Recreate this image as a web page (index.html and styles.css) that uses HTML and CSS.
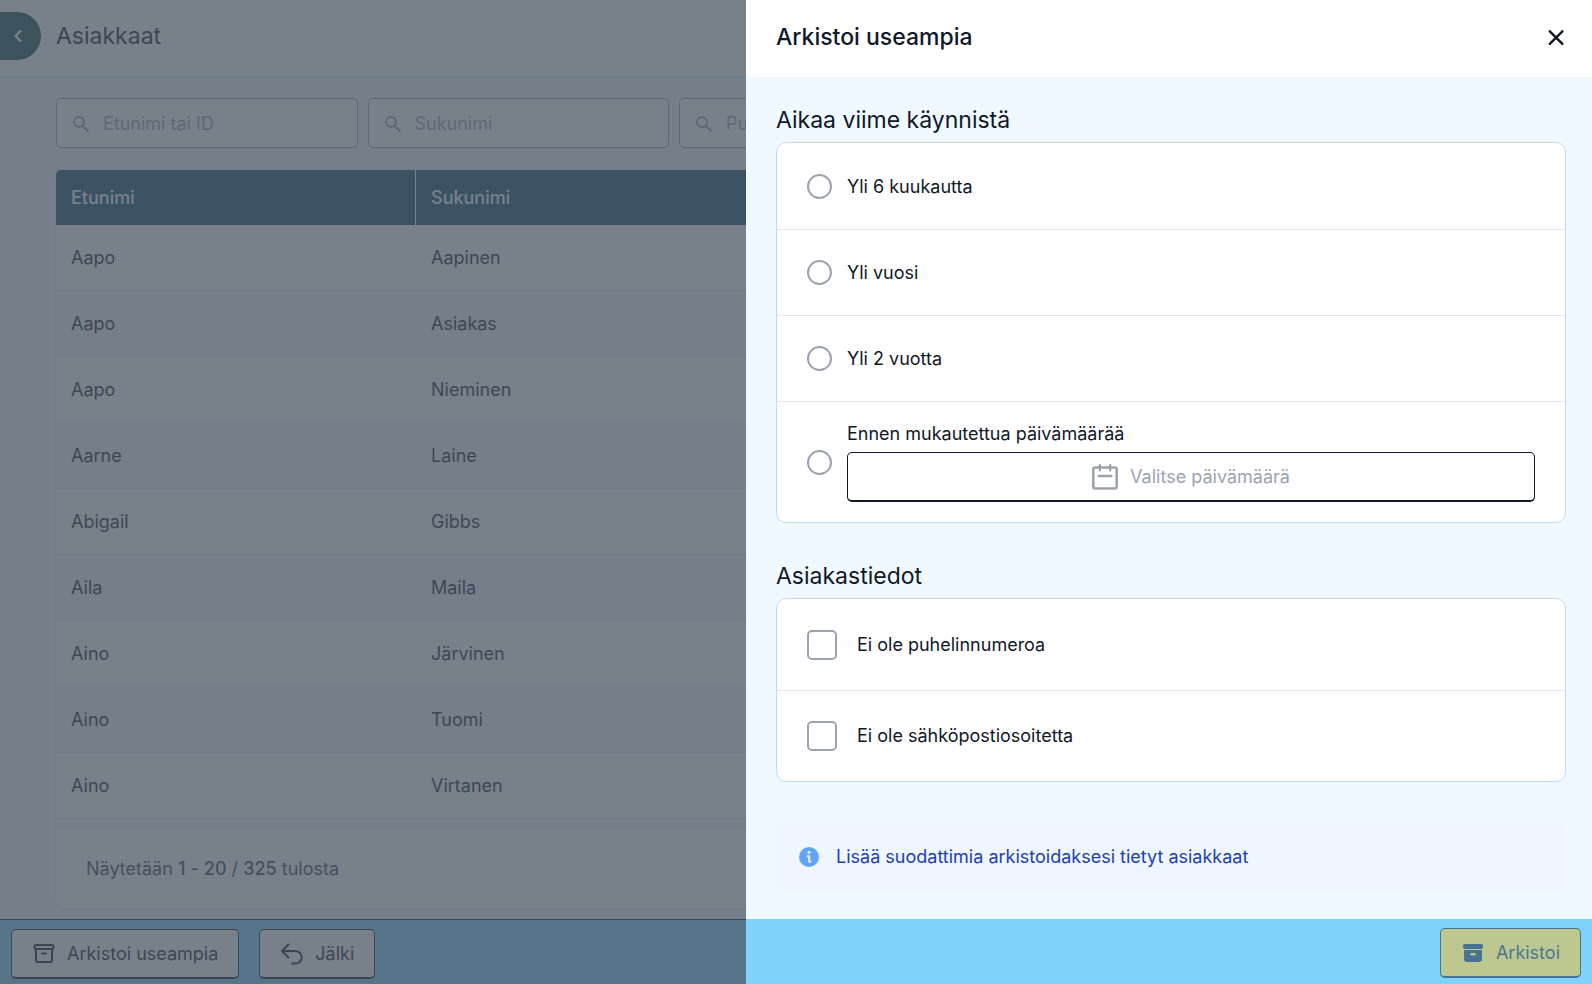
FILE: index.html
```html
<!DOCTYPE html>
<html lang="fi">
<head>
<meta charset="utf-8">
<meta name="viewport" content="width=device-width, initial-scale=1">
<title>Asiakkaat</title>
<link rel="stylesheet" href="styles.css">
</head>
<body>
<div class="page">
  <header class="page-header">
    <button class="nav-toggle" type="button" aria-label="Takaisin">
      <svg width="24" height="24" viewBox="0 0 20 20" fill="currentColor"><path fill-rule="evenodd" d="M12.7 5.3a1 1 0 0 1 0 1.4L9.4 10l3.3 3.3a1 1 0 0 1-1.4 1.4l-4-4a1 1 0 0 1 0-1.4l4-4a1 1 0 0 1 1.4 0z"/></svg>
    </button>
    <h1 class="page-title">Asiakkaat</h1>
  </header>

  <main class="content">
    <form class="filters">
      <label class="search">
        <svg class="search-icon" width="20" height="20" viewBox="0 0 20 20" fill="currentColor"><path fill-rule="evenodd" d="M8 4a4 4 0 1 0 0 8 4 4 0 0 0 0-8zM2 8a6 6 0 1 1 10.9 3.5l4.8 4.8a1 1 0 0 1-1.4 1.4l-4.8-4.8A6 6 0 0 1 2 8z"/></svg>
        <input class="search-input" type="text" placeholder="Etunimi tai ID" aria-label="Etunimi tai ID">
      </label>
      <label class="search">
        <svg class="search-icon" width="20" height="20" viewBox="0 0 20 20" fill="currentColor"><path fill-rule="evenodd" d="M8 4a4 4 0 1 0 0 8 4 4 0 0 0 0-8zM2 8a6 6 0 1 1 10.9 3.5l4.8 4.8a1 1 0 0 1-1.4 1.4l-4.8-4.8A6 6 0 0 1 2 8z"/></svg>
        <input class="search-input" type="text" placeholder="Sukunimi" aria-label="Sukunimi">
      </label>
      <label class="search">
        <svg class="search-icon" width="20" height="20" viewBox="0 0 20 20" fill="currentColor"><path fill-rule="evenodd" d="M8 4a4 4 0 1 0 0 8 4 4 0 0 0 0-8zM2 8a6 6 0 1 1 10.9 3.5l4.8 4.8a1 1 0 0 1-1.4 1.4l-4.8-4.8A6 6 0 0 1 2 8z"/></svg>
        <input class="search-input" type="text" placeholder="Puhelin" aria-label="Puhelin">
      </label>
    </form>

    <section class="results">
      <div class="table-scroll">
        <table class="clients">
          <thead>
            <tr><th class="col-first" scope="col">Etunimi</th><th scope="col">Sukunimi</th></tr>
          </thead>
          <tbody>
            <tr><td>Aapo</td><td>Aapinen</td></tr>
            <tr><td>Aapo</td><td>Asiakas</td></tr>
            <tr><td>Aapo</td><td>Nieminen</td></tr>
            <tr><td>Aarne</td><td>Laine</td></tr>
            <tr><td>Abigail</td><td>Gibbs</td></tr>
            <tr><td>Aila</td><td>Maila</td></tr>
            <tr><td>Aino</td><td>Järvinen</td></tr>
            <tr><td>Aino</td><td>Tuomi</td></tr>
            <tr><td>Aino</td><td>Virtanen</td></tr>
            <tr><td></td><td></td></tr>
          </tbody>
        </table>
      </div>
      <p class="pagination">Näytetään <b>1</b> <b>-</b> <b>20</b> / <b>325</b> tulosta</p>
    </section>
  </main>

  <footer class="toolbar">
    <button class="btn" type="button">
      <svg width="22" height="22" viewBox="0 0 22 22" fill="none" stroke="currentColor" stroke-width="2" stroke-linecap="round" stroke-linejoin="round"><rect x="1.500" y="2" width="19" height="4" rx="1.500"/><path d="M3 6.500V17a2 2 0 0 0 2 2h12a2 2 0 0 0 2-2V6.500M9 10.500h4"/></svg>
      Arkistoi useampia
    </button>
    <button class="btn" type="button">
      <svg width="22" height="22" viewBox="0 0 22 22" fill="none" stroke="currentColor" stroke-width="2" stroke-linecap="round" stroke-linejoin="round"><path d="M7.500 14.500 1 8l6.500-6.500M1 8h13.500a6 6 0 0 1 0 12.500H11"/></svg>
      Jälki
    </button>
  </footer>
</div>

<div class="overlay"></div>

<aside class="panel" role="dialog" aria-labelledby="panel-title">
  <header class="panel-header">
    <h2 class="panel-title" id="panel-title">Arkistoi useampia</h2>
    <button class="close" type="button" aria-label="Sulje">
      <svg width="22" height="22" viewBox="0 0 22 22" fill="none" stroke="currentColor" stroke-width="2.400" stroke-linecap="round"><path d="M4.800 5.300l12.600 12.600M17.400 5.300l-12.600 12.600"/></svg>
    </button>
  </header>

  <div class="panel-body">
    <section class="group">
      <h3 class="group-title">Aikaa viime käynnistä</h3>
      <div class="card">
        <label class="option"><input class="radio" type="radio" name="age">Yli 6 kuukautta</label>
        <label class="option"><input class="radio" type="radio" name="age">Yli vuosi</label>
        <label class="option"><input class="radio" type="radio" name="age">Yli 2 vuotta</label>
        <div class="option option-custom">
          <input class="radio" type="radio" name="age" id="age-custom">
          <div class="custom">
            <label for="age-custom">Ennen mukautettua päivämäärää</label>
            <button class="date" type="button">
              <svg width="26" height="26" viewBox="0 0 26 26" fill="none" stroke="currentColor" stroke-width="2.500" stroke-linecap="round" stroke-linejoin="round"><rect x="1.300" y="3.500" width="23.400" height="21" rx="2"/><path d="M7.800 1v5.500M18.200 1v5.500" stroke-width="2.200"/><path d="M6.700 12h12.600"/></svg>
              Valitse päivämäärä
            </button>
          </div>
        </div>
      </div>
    </section>

    <section class="group">
      <h3 class="group-title">Asiakastiedot</h3>
      <div class="card">
        <label class="option option-check"><input class="check" type="checkbox">Ei ole puhelinnumeroa</label>
        <label class="option option-check"><input class="check" type="checkbox">Ei ole sähköpostiosoitetta</label>
      </div>
    </section>

    <p class="notice">
      <svg width="20" height="20" viewBox="0 0 20 20"><circle cx="10" cy="10" r="10" fill="#60a5fa"/><circle cx="10" cy="5.300" r="1.500" fill="#eff6ff"/><path d="M8.700 9.200h1.500v5.600h1.300" fill="none" stroke="#eff6ff" stroke-width="2" stroke-linecap="round" stroke-linejoin="round"/></svg>
      Lisää suodattimia arkistoidaksesi tietyt asiakkaat
    </p>
  </div>

  <footer class="panel-footer">
    <button class="btn btn-primary" type="button" disabled>
      <svg width="22" height="22" viewBox="0 0 22 22" fill="currentColor"><rect x="1" y="2" width="20" height="5" rx="2"/><path fill-rule="evenodd" d="M2 8h18v9a3 3 0 0 1-3 3H5a3 3 0 0 1-3-3zM9.500 11a1.200 1.200 0 0 0 0 2.400h3a1.200 1.200 0 0 0 0-2.400z"/></svg>
      Arkistoi
    </button>
  </footer>
</aside>
</body>
</html>
```

FILE: styles.css
```css
* {
  box-sizing: border-box;
}

body {
  margin: 0;
  font-family: Inter, "Liberation Sans", sans-serif;
  font-size: 18px;
  line-height: 24px;
  color: #111827;
  background: #f0f9ff;
}

h1, h2, h3, p {
  margin: 0;
  font-weight: 400;
}

button, input {
  font: inherit;
  color: inherit;
}

button {
  padding: 0;
  border: 0;
  background: none;
}

svg {
  flex: none;
}

.page {
  display: flex;
  flex-direction: column;
  height: 100vh;
  overflow: hidden;
}

.page-header {
  display: flex;
  flex: none;
  align-items: center;
  gap: 15px;
  height: 77px;
  padding-bottom: 4px;
  background: #fff;
  border-bottom: 1px solid #bae6fd;
}

.nav-toggle {
  display: flex;
  align-items: center;
  justify-content: flex-end;
  width: 41px;
  height: 48px;
  padding-right: 11px;
  color: #fff;
  background: #134e4a;
  border-radius: 0 24px 24px 0;
}

.page-title {
  font-size: 23px;
  line-height: 30px;
}

.content {
  display: flex;
  flex: 1;
  flex-direction: column;
  gap: 22px;
  min-height: 0;
  padding: 21px 56px 11px;
}

.filters {
  display: grid;
  flex: none;
  grid-template-columns: repeat(4, 1fr);
  gap: 10px;
  padding-right: 244px;
}

.search {
  display: flex;
  align-items: center;
  gap: 12px;
  min-width: 0;
  height: 50px;
  padding: 1px 14px 0;
  color: #9ca3af;
  background: #fff;
  border: 1px solid #9ca3af;
  border-radius: 5px;
}

.search-input {
  flex: 1;
  min-width: 0;
  padding: 0;
  background: none;
  border: 0;
}

.search-input::placeholder {
  color: #9ca3af;
}

.results {
  display: flex;
  flex: 1;
  flex-direction: column;
  min-height: 0;
  border-radius: 5px 5px 10px 10px;
  overflow: hidden;
  box-shadow: 0 1px 3px rgba(0, 0, 0, 0.1);
}

.table-scroll {
  flex: 1;
  min-height: 0;
  overflow: hidden;
}

.clients {
  width: 100%;
  table-layout: fixed;
  border-collapse: separate;
  border-spacing: 0;
  background: #fff;
}

.clients th,
.clients td {
  padding: 0 15px;
  text-align: left;
}

.clients th {
  height: 55px;
  font-weight: 500;
  color: #fff;
  background: #0c4a6e;
}

.clients .col-first {
  width: 360px;
  border-right: 1px solid #fff;
}

.clients td {
  height: 66px;
  border-bottom: 1px solid #e5e7eb;
}

.clients tbody tr:nth-child(even) {
  background: #f6f6fa;
}

.pagination {
  flex: none;
  padding: 28px 30px 27px;
  color: #374151;
  background: #fff;
  border-top: 1px solid #e5e7eb;
}

.pagination b {
  font-weight: 500;
}

.toolbar {
  display: flex;
  flex: none;
  align-items: center;
  gap: 20px;
  height: 65px;
  padding: 4px 11px 0;
  background: #7dd3fc;
  border-top: 1px solid #111827;
}

.btn {
  display: flex;
  align-items: center;
  gap: 12px;
  height: 50px;
  padding: 0 20px 0 21px;
  background: #fff;
  border: 1px solid #111827;
  border-bottom-width: 2px;
  border-radius: 5px;
}

.overlay {
  position: fixed;
  inset: 0;
  background: rgba(75, 85, 99, 0.75);
}

.panel {
  position: fixed;
  top: 0;
  right: 0;
  bottom: 0;
  display: flex;
  flex-direction: column;
  width: 846px;
  max-width: 100%;
  background: #f0f9ff;
}

.panel-header {
  display: flex;
  flex: none;
  align-items: center;
  justify-content: space-between;
  height: 77px;
  padding: 0 25px 4px 30px;
  background: #fff;
}

.panel-title {
  font-size: 23px;
  font-weight: 500;
  line-height: 30px;
}

.close {
  display: flex;
}

.panel-body {
  flex: 1;
  min-height: 0;
  padding: 28px 26px 0 30px;
  overflow: hidden;
}

.group {
  margin-bottom: 38px;
}

.group-title {
  margin-bottom: 7px;
  font-size: 23px;
  line-height: 30px;
}

.card {
  background: #fff;
  border: 1px solid #bfdbfe;
  border-radius: 10px;
}

.option {
  display: flex;
  align-items: center;
  gap: 15px;
  padding: 30px;
}

.option:first-child {
  padding-top: 31px;
}

.option + .option {
  border-top: 1px solid #e5e7eb;
}

.option-custom {
  padding: 20px 30px;
}

.option-check {
  gap: 20px;
}

.radio,
.check {
  flex: none;
  margin: 0;
  appearance: none;
  background: #fff;
  border: 2px solid #9ca3af;
}

.radio {
  width: 25px;
  height: 25px;
  border-radius: 50%;
}

.check {
  width: 30px;
  height: 30px;
  border-radius: 5px;
}

.custom {
  display: flex;
  flex: 1;
  flex-direction: column;
  gap: 6px;
}

.date {
  display: flex;
  align-items: center;
  justify-content: center;
  gap: 12px;
  height: 50px;
  color: #9ca3af;
  background: #fff;
  border: 1px solid #111827;
  border-bottom-width: 2px;
  border-radius: 5px;
}

.notice {
  display: flex;
  align-items: center;
  gap: 17px;
  margin-top: 43px;
  padding: 20px 23px 21px;
  color: #1e40af;
  background: #eff6ff;
  border-radius: 6px;
}

.panel-footer {
  display: flex;
  flex: none;
  align-items: center;
  justify-content: flex-end;
  height: 65px;
  padding: 3px 11px 0 30px;
  background: #7dd3fc;
}

.btn-primary {
  background: #fbbf24;
  opacity: 0.5;
}
```
